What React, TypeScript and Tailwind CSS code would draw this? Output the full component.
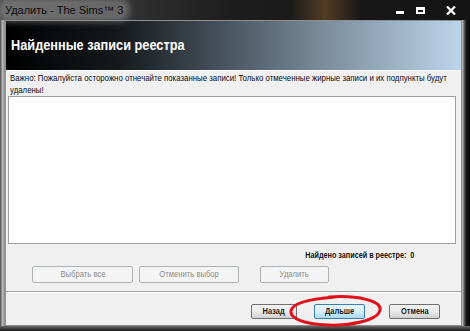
import React from "react";

const font = { fontFamily: '"Liberation Sans", "DejaVu Sans", sans-serif' };

const GhostButton = ({ label, className }: { label: string; className?: string }) => (
  <div
    className={`${className ?? ""} h-[17px] flex items-center justify-center rounded-[2px] border border-[#adb2b5] bg-[#f4f4f4] text-[#8d8d8d]`}
  >
    <span className="text-[8.5px] scale-x-[0.9] whitespace-nowrap">{label}</span>
  </div>
);

const NavButton = ({ label, primary, className }: { label: string; primary?: boolean; className?: string }) => (
  <div
    className={`${className ?? ""} h-[15px] flex items-center justify-center rounded-[2px] border text-[#1b1b1b] ${
      primary
        ? "border-[#3c7fb1] bg-gradient-to-b from-[#eaf6fd] via-[#d9f0fc] to-[#a7d9f5]"
        : "border-[#707070] bg-gradient-to-b from-[#f2f2f2] via-[#ebebeb] to-[#cfcfcf]"
    }`}
  >
    <span className="text-[8.5px] font-bold scale-x-[0.88] whitespace-nowrap">{label}</span>
  </div>
);

export default function App() {
  return (
    <div
      style={font}
      className="w-[470px] h-[331px] flex flex-col overflow-hidden bg-gradient-to-b from-[#1c1c1c] to-[#0c0c0c]"
    >
      {/* title bar */}
      <div className="relative h-[20px] flex items-center bg-gradient-to-r from-[#4a4a4a] via-[#1d1d1d] to-[#141414]">
        <div className="absolute left-[290px] top-0 h-[20px] w-[70px] bg-gradient-to-r from-transparent via-[#6b4a26]/70 to-transparent" />
        <span className="relative ml-[2px] px-[3px] rounded-[6px] bg-[#8a8a8a]/60 shadow-[0_0_6px_4px_rgba(138,138,138,0.6)] text-[11px] text-[#0c0c0c]">
          Удалить - The Sims™ 3
        </span>
        <div className="relative ml-auto flex items-center gap-[12px] pr-[14px] text-white">
          <div className="w-[8px] h-[3px] bg-white mt-[4px]" />
          <div className="w-[9px] h-[7px] border-2 border-white border-t-[3px]" />
          <svg width="10" height="9" viewBox="0 0 10 9" className="ml-[9px]">
            <path d="M1 0.5 L9 8.5 M9 0.5 L1 8.5" stroke="white" strokeWidth="2.2" />
          </svg>
        </div>
      </div>

      <div className="flex flex-1">
        {/* left frame */}
        <div className="w-[5px] bg-gradient-to-r from-[#4a4a4a] via-[#b8b8b8] to-[#8a8a8a]" />

        {/* client */}
        <div className="w-[457px] h-[306px] flex flex-col bg-[#f0f0f0] border border-[#8f8f8f]">
          <div className="h-[50px] flex items-center pl-[5px] bg-[linear-gradient(90deg,#000_0%,#161a1d_25%,#4d5964_50%,#8699aa_75%,#bcd4eb_100%)] border-b border-white">
            <span className="text-[15px] font-bold text-white origin-left scale-x-[0.85] whitespace-nowrap">
              Найденные записи реестра
            </span>
          </div>
          <div className="pl-[4px] pt-[1px] text-[9px] leading-[12px] text-[#0d0d1a] h-[25px] whitespace-nowrap">
            <div className="origin-left scale-x-[0.87]">
              Важно: Пожалуйста осторожно отнечайте показанные записи! Только отмеченные жирные записи и их подпункты будут
              <br />
              удалены!
            </div>
          </div>
          <div className="ml-[2px] mr-[5px] h-[148px] bg-white border border-[#9d9d9d]" />
          <div className="flex justify-end pr-[47px] mt-[5px] h-[12px] items-center text-[#111]">
            <span className="text-[8.5px] font-bold origin-right scale-x-[0.85] whitespace-nowrap">
              Найдено записей в реестре:&nbsp;&nbsp;0
            </span>
          </div>
          <div className="flex mt-[5px] pl-[26px]">
            <GhostButton label="Выбрать все" className="w-[101px]" />
            <GhostButton label="Отменить выбор" className="w-[100px] ml-[6px]" />
            <GhostButton label="Удалить" className="w-[69px] ml-[21px]" />
          </div>
          <div className="mt-[8px] h-[2px] border-t border-[#a0a0a0] border-b border-b-white" />
          <div className="relative flex pl-[245px] mt-[11px]">
            <NavButton label="Назад" className="w-[46px]" />
            <NavButton label="Дальше" primary className="w-[51px] ml-[17px]" />
            <NavButton label="Отмена" className="w-[51px] ml-[24px]" />
            <svg
              className="absolute left-[281px] top-[-10px]"
              width="98"
              height="34"
              viewBox="0 0 98 34"
            >
              <path
                d="M42 3 C71 1 95 7 93 16 C91 27 61 32 40 31 C18 30 3 25 4 17 C5 9 22 5 48 3"
                fill="none"
                stroke="#e0101c"
                strokeWidth="3"
                strokeLinecap="round"
              />
            </svg>
          </div>
        </div>

        {/* right frame */}
        <div className="flex-1 bg-gradient-to-r from-[#c9c9c9] via-[#1a1a1a] to-[#050505]" />
      </div>
      <div className="h-[5px] bg-gradient-to-b from-[#6a6a6a] to-[#1a1a1a]" />
    </div>
  );
}
